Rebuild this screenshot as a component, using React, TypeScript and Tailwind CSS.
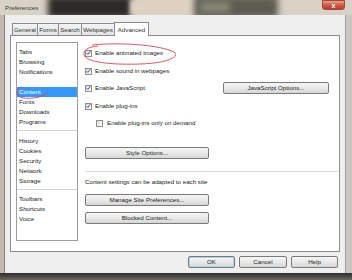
import React from 'react';

const font = { fontFamily: '"Liberation Sans", Arial, sans-serif' };

function Check({ checked }: { checked: boolean }) {
  return (
    <span className="w-[7px] h-[7px] shrink-0 border border-[#8e8f8f] bg-linear-to-br from-[#dcdcdc] to-[#ffffff] flex items-center justify-center">
      {checked && (
        <svg width="6" height="6" viewBox="0 0 6 6">
          <path d="M0.8 3.2 L2.3 4.8 L5.2 0.8" stroke="#3d5a8c" strokeWidth="1.2" fill="none" />
        </svg>
      )}
    </span>
  );
}

function Btn({ label, className = '' }: { label: string; className?: string }) {
  return (
    <div
      className={`h-[12px] flex items-center justify-center rounded-[2px] border border-[#7a7a7a] bg-linear-to-b from-[#f5f5f5] via-[#e9e9e9] to-[#d6d6d6] text-[6.2px] text-[#222] ${className}`}
    >
      {label}
    </div>
  );
}

const tabs = [
  { name: 'General', w: 'w-[26px]' },
  { name: 'Forms', w: 'w-[22px]' },
  { name: 'Search', w: 'w-[24px]' },
  { name: 'Webpages', w: 'w-[34px]' },
];

export default function App() {
  return (
    <div className="relative w-[352px] h-[280px] overflow-hidden flex flex-col bg-[#cfc6b8]" style={font}>
      {/* title bar */}
      <div className="relative h-[15px] shrink-0 bg-[#d9d1c5] flex items-center pl-[5px] overflow-hidden">
        <div className="absolute left-[48px] top-[-4px] w-[84px] h-[22px] bg-[#2b2a28] blur-[3px]" />
        <div className="absolute left-[130px] top-0 w-[64px] h-[15px] bg-[#ddd2c0] blur-[2px]" />
        <div className="absolute left-[194px] top-[-4px] w-[84px] h-[22px] bg-[#5d5c52] blur-[3px]" />
        <div className="absolute left-[200px] top-[2px] w-[30px] h-[10px] bg-[#8a887a] blur-[3px]" />
        <span className="relative text-[6.2px] text-[#3a3a3a]">Preferences</span>
        <div className="absolute right-[7px] top-0 w-[23px] h-[10px] rounded-b-[3px] border border-[#a04838] bg-linear-to-b from-[#e8a090] via-[#d05a48] to-[#c03a2a] flex items-center justify-center">
          <span className="text-[7px] font-bold leading-none text-white">x</span>
        </div>
      </div>

      <div className="flex flex-1">
        <div className="w-[5px] bg-[#c4bbae] border-r border-[#8a8478]" />
        <div className="flex-1 bg-[#efefef] flex flex-col pl-[5px] pr-[5px] pt-[7px]">
          {/* tabs */}
          <div className="h-[13px] flex items-end pl-[2px]">
            {tabs.map((t) => (
              <div
                key={t.name}
                className={`${t.w} h-[12px] -ml-px first:ml-0 border border-b-0 border-[#898c95] bg-linear-to-b from-[#f4f4f4] to-[#e2e2e2] flex items-center justify-center text-[6.2px] text-[#333]`}
              >
                {t.name}
              </div>
            ))}
            <div className="w-[35px] h-[14px] -ml-px -mb-px relative z-10 border border-b-0 border-[#898c95] bg-white flex items-center justify-center text-[6.2px] text-[#333]">
              Advanced
            </div>
          </div>

          {/* panel */}
          <div className="h-[217px] border border-[#898c95] bg-white flex pl-[5px] pt-[6px]">
            <div className="w-[62px] h-[199px] border border-[#9a9ea6] flex flex-col pt-[4px] text-[6.2px] text-[#222]">
              {['Tabs', 'Browsing', 'Notifications'].map((s) => (
                <div key={s} className="h-[10px] flex items-center pl-[2px]">{s}</div>
              ))}
              <div className="h-[10px] mt-[10px] flex items-center pl-[2px] bg-[#3399ff] text-white">Content</div>
              {['Fonts', 'Downloads', 'Programs'].map((s) => (
                <div key={s} className="h-[10px] flex items-center pl-[2px]">{s}</div>
              ))}
              <div className="mt-[3px] mb-[5px] border-t border-[#d4d4d4]" />
              {['History', 'Cookies', 'Security', 'Network', 'Storage'].map((s) => (
                <div key={s} className="h-[10px] flex items-center pl-[2px]">{s}</div>
              ))}
              <div className="mt-[3px] mb-[4px] border-t border-[#d4d4d4]" />
              {['Toolbars', 'Shortcuts', 'Voice'].map((s) => (
                <div key={s} className="h-[10px] flex items-center pl-[2px]">{s}</div>
              ))}
            </div>

            <div className="flex-1 ml-[7px] pr-[1px] pt-[6px] flex flex-col text-[6.2px] text-[#222]">
              <div className="h-[10px] flex items-center gap-[3px]">
                <Check checked />
                <span>Enable animated images</span>
              </div>
              <div className="h-[10px] mt-[8px] flex items-center gap-[3px]">
                <Check checked />
                <span>Enable sound in webpages</span>
              </div>
              <div className="h-[10px] mt-[7px] flex items-center gap-[3px]">
                <Check checked />
                <span>Enable JavaScript</span>
                <Btn label="JavaScript Options..." className="ml-auto mr-[9px] w-[106px]" />
              </div>
              <div className="h-[10px] mt-[8px] flex items-center gap-[3px]">
                <Check checked />
                <span>Enable plug-ins</span>
              </div>
              <div className="h-[10px] mt-[7px] ml-[11px] flex items-center gap-[4px]">
                <Check checked={false} />
                <span>Enable plug-ins only on demand</span>
              </div>
              <Btn label="Style Options..." className="mt-[19px] w-[124px]" />
              <div className="mt-[12px] border-t border-[#d8d8d8]" />
              <div className="h-[10px] mt-[5px] flex items-center">Content settings can be adapted to each site</div>
              <Btn label="Manage Site Preferences..." className="mt-[7px] w-[124px]" />
              <Btn label="Blocked Content..." className="mt-[6px] w-[124px]" />
            </div>
          </div>

          {/* dialog buttons */}
          <div className="mt-[4px] flex justify-end gap-[4px] pr-[2px]">
            <Btn label="OK" className="w-[47px] border-[#3c7fb1] shadow-[inset_0_0_0_1px_#a9d5f5]" />
            <Btn label="Cancel" className="w-[48px]" />
            <Btn label="Help" className="w-[47px]" />
          </div>
        </div>
        <div className="w-[7px] bg-[#c9c6c0] border-l border-[#9a9a9a]" />
      </div>

      <div className="h-[7px] shrink-0 bg-linear-to-b from-[#2e2e2e] to-[#6e675c]" />

      {/* red hand-drawn annotations */}
      <svg className="absolute left-0 top-0 pointer-events-none" width="352" height="280">
        <path
          d="M92 45 C120 42 160 45 174 52 C180 56 170 63 140 64 C110 65 86 62 84 55 C83 50 88 47 98 46"
          stroke="#e0404e"
          strokeWidth="0.9"
          fill="none"
        />
        <path d="M22 87 C15 88 14 97 24 98 C33 99 43 97 48 93" stroke="#e0404e" strokeWidth="0.9" fill="none" />
      </svg>
    </div>
  );
}
